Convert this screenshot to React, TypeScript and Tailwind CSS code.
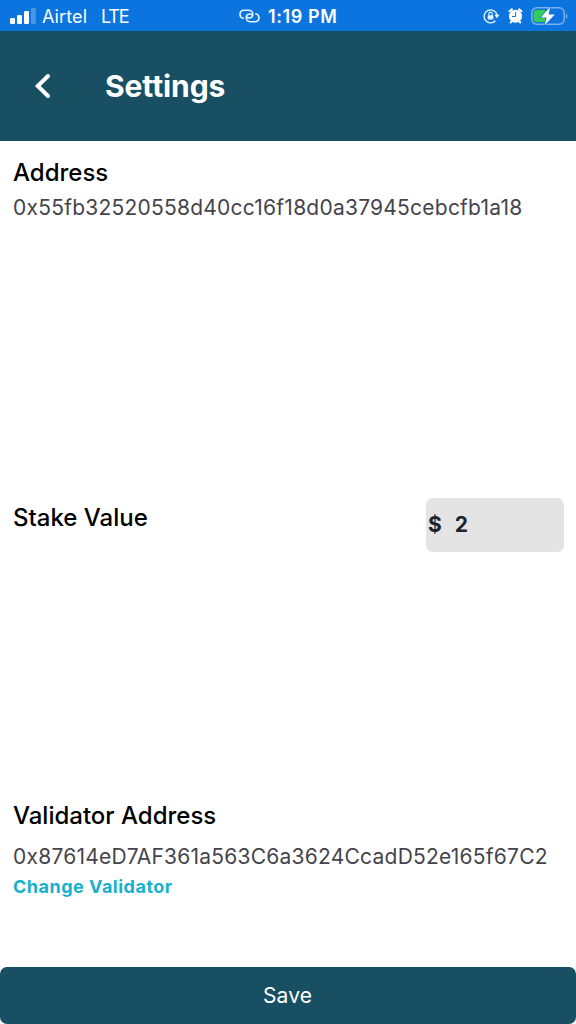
interface AddressProps {
    title: string;
    value: string;
    valueClass: string;
}

function SignalBars() {
    return (
        <svg width="26" height="16" viewBox="0 0 26 16" fill="#fff">
            <rect x="0" y="10" width="5" height="6" rx="1.3" />
            <rect x="7" y="7" width="5" height="9" rx="1.3" />
            <rect x="14" y="3" width="5" height="13" rx="1.3" />
            <rect x="21" y="0" width="4.8" height="16" rx="1.3" opacity="0.25" />
        </svg>
    );
}

function HotspotLink() {
    return (
        <svg width="21" height="14" viewBox="0 0 21 14" fill="none" stroke="#e4f2ff" strokeWidth="1.6" strokeLinecap="round">
            <path d="M4.2 9.3C2.3 8.8 1 7.4 1 5.4C1 2.9 2.8 1.2 5.2 1.2H9.4C12 1.2 13.8 3 13.8 5.2C13.8 7.4 12.2 9 9.9 9C8.7 9 7.9 8.4 7.6 7.6" />
            <path d="M16.8 4.7C18.7 5.2 20 6.6 20 8.6C20 11.1 18.2 12.8 15.8 12.8H11.6C9 12.8 7.2 11 7.2 8.8C7.2 6.6 8.8 5 11.1 5C12.3 5 13.1 5.6 13.4 6.4" />
        </svg>
    );
}

function RotationLock() {
    return (
        <svg width="17" height="16" viewBox="0 0 17 16" fill="none" stroke="#e8f3ff" strokeWidth="1.4">
            <path d="M12.4 12.8A6.5 6.5 0 1 1 14 7" />
            <path d="M11.3 6.8H16.5L13.9 10.2Z" fill="#e8f3ff" stroke="none" />
            <rect x="4.7" y="7.2" width="5.6" height="4.2" rx="0.6" fill="#e8f3ff" stroke="none" />
            <path d="M5.9 7.4V5.7A1.6 1.6 0 0 1 9.1 5.7V7.4" strokeWidth="1.1" />
        </svg>
    );
}

function AlarmClock() {
    return (
        <svg width="15" height="16" viewBox="0 0 15 16" fill="none" strokeLinecap="round">
            <circle cx="7.5" cy="8.2" r="6.5" fill="#fff" />
            <path d="M1.5 3.3L3.9 1.4M13.5 3.3L11.1 1.4M2.7 14.5L4 13.1M12.300 14.5L11 13.1" stroke="#fff" strokeWidth="2" />
            <path d="M7.6 4.5V8.5H4.3" stroke="#0b74de" strokeWidth="1" />
        </svg>
    );
}

function Battery() {
    return (
        <svg width="37" height="20" viewBox="0 0 37 20">
            <rect x="0.8" y="1.8" width="32.4" height="16.4" rx="5" fill="none" stroke="#fff" strokeOpacity="0.45" strokeWidth="1.5" />
            <path d="M35 7.2C36.8 8 36.8 12 35 12.8Z" fill="#fff" fillOpacity="0.45" />
            <path d="M5.5 4H14V16H5.500A3 3 0 0 1 2.5 13V7A3 3 0 0 1 5.5 4Z" fill="#33cc5a" />
            <path d="M19.2 0.8L9.8 11.4H15.5L13.6 19.3L23.8 8.6H17.6Z" fill="#fff" stroke="#0b74de" strokeWidth="1.2" paintOrder="stroke" />
        </svg>
    );
}

function StatusBar() {
    return (
        <div className="grid h-[31px] grid-cols-3 items-center bg-[#0b74de] text-white">
            <div className="flex items-center pl-[10px] text-[18px]">
                <SignalBars />
                <span className="ml-[6px] pt-px tracking-[0.1px]">Airtel</span>
                <span className="ml-[14px] pt-px tracking-[-1.2px]">LTE</span>
            </div>
            <div className="flex items-center pl-[47px]">
                <HotspotLink />
                <span className="ml-[8px] pt-px text-[18px] font-semibold tracking-[0.6px] whitespace-nowrap">1:19 PM</span>
            </div>
            <div className="flex items-center justify-end pr-[8px]">
                <RotationLock />
                <span className="ml-[8px]"><AlarmClock /></span>
                <span className="ml-[8px]"><Battery /></span>
            </div>
        </div>
    );
}

function AddressBlock({ title, value, valueClass }: AddressProps) {
    return (
        <div className="whitespace-nowrap">
            <h2 className="text-[24px] leading-8 font-medium text-black">{title}</h2>
            <p className={`text-[21px] leading-8 tracking-[0.23px] text-[#44444c] ${valueClass}`}>{value}</p>
        </div>
    );
}

export default function App() {
    return (
        <div className="flex h-screen flex-col overflow-hidden bg-white font-['Inter',sans-serif]">
            <StatusBar />
            <header className="flex h-[110px] items-center bg-[#184f63] pl-[34px]">
                <svg width="17" height="26" viewBox="0 0 17 26" fill="none" stroke="#fff" strokeWidth="4" strokeLinecap="round">
                    <path d="M14 3L3.8 13L14 23" />
                </svg>
                <h1 className="ml-[54px] text-[30px] font-bold tracking-[-0.1px] text-white">Settings</h1>
            </header>
            <main className="flex flex-1 flex-col pt-[16px] pr-[12px] pl-[13px]">
                <AddressBlock title="Address" value="0x55fb32520558d40cc16f18d0a37945cebcfb1a18" valueClass="mt-[3px]" />
                <div className="mt-[274px] flex h-[54px] items-start justify-between">
                    <label className="text-[24px] leading-[40px] font-medium text-black">Stake Value</label>
                    <div className="flex h-[54px] w-[138px] items-center rounded-[7px] bg-[#e4e4e4] pl-[2px] text-[21px] font-bold text-[#1c2430]">
                        <span>$</span>
                        <span className="ml-[13px]">2</span>
                    </div>
                </div>
                <div className="mt-[248px] flex flex-col">
                    <AddressBlock title="Validator Address" value="0x87614eD7AF361a563C6a3624CcadD52e165f67C2" valueClass="mt-[9px]" />
                    <a className="text-[18px] leading-7 font-bold tracking-[0.5px] text-[#17b1cd]">Change Validator</a>
                </div>
            </main>
            <button className="h-[57px] shrink-0 rounded-[7px] bg-[#184f63] pr-[1px] text-[21px] tracking-[0.1px] text-white">Save</button>
        </div>
    );
}
